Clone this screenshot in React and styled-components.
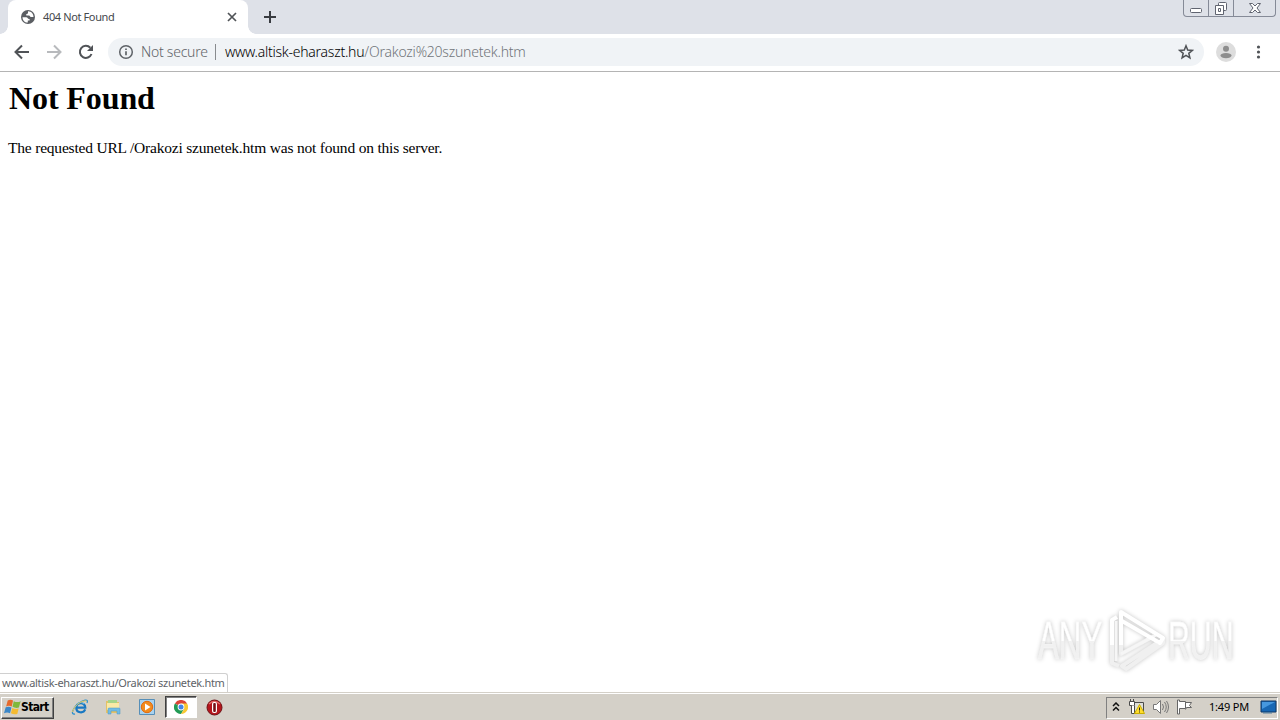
import React from 'react';
import styled, { createGlobalStyle } from 'styled-components';

const Global = createGlobalStyle`
  * { box-sizing: border-box; }
  html, body { margin: 0; width: 1280px; height: 720px; overflow: hidden; background: #fff; }
  svg { display: block; flex: none; }
`;
const Screen = styled.div`
  width: 1280px; height: 720px; display: flex; flex-direction: column;
  font-family: "DejaVu Sans Condensed", "DejaVu Sans", sans-serif;
`;
const Text = styled.span`
  white-space: pre; flex: none;
  font-family: ${p => p.$font || '"Noto Sans", sans-serif'};
  font-size: ${p => p.$size || 11}px;
  font-weight: ${p => p.$weight || 400};
  letter-spacing: ${p => p.$track || 0}px;
  color: ${p => p.$color || '#000'};
  padding-bottom: ${p => p.$lift || 0}px;
`;
const TabStrip = styled.div`
  height: 34px; background: #dee1e8; display: flex; padding-left: 8px; flex: none;
`;
const Tab = styled.div`
  position: relative; width: 240px; height: 34px; background: #fff; border-radius: 8px 8px 0 0;
  display: flex; align-items: center; padding: 0 10px 0 12px;
  &::before, &::after {
    content: ""; position: absolute; bottom: 0; width: 8px; height: 8px;
  }
  &::before { left: -8px; background: radial-gradient(circle at 0 0, transparent 7.5px, #fff 8px); }
  &::after { right: -8px; background: radial-gradient(circle at 100% 0, transparent 7.5px, #fff 8px); }
`;
const TabTitle = styled.div`flex: 1; padding-left: 7px; display: flex;`;
const NewTab = styled.div`padding: 10px 0 0 15px;`;
const WindowControls = styled.div`
  margin-left: auto; margin-right: 4px; width: 93px; height: 17px; display: flex;
  border: 1px solid #858a97; border-top: 0; border-radius: 0 0 4px 4px;
`;
const WindowButton = styled.div`
  width: ${p => p.$w}px; height: 16px; display: flex; justify-content: center;
  border-right: ${p => (p.$last ? '0' : '1px solid #858a97')};
`;
const Toolbar = styled.div`
  height: 38px; flex: none; display: flex; align-items: center; padding: 0 12px 1px;
  border-bottom: 1px solid #b4b4b4; background: #fff;
`;
const NavButton = styled.div`width: 20px; margin-right: 12px;`;
const Omnibox = styled.div`
  width: 1096px; height: 28px; border-radius: 14px; background: #f0f3f6;
  display: flex; align-items: center; padding: 0 10px;
`;
const Divider = styled.div`width: 1px; height: 16px; margin: 0 9px 0 7px; background: #888b8e;`;
const Security = styled.div`width: 74px; padding-left: 7px; display: flex;`;
const Star = styled.div`margin-left: auto;`;
const Profile = styled.div`margin: 0 14px 0 12px;`;
const Page = styled.main`
  position: relative; flex: 1; background: #fff; padding: 8px; min-height: 0;
  font-family: "Liberation Serif", serif; color: #000;
`;
const Heading = styled.h1`
  margin: 0; height: 37px; padding: 0 0 0 1px; font-size: 32px; line-height: 37px; letter-spacing: -0.1px;
`;
const Paragraph = styled.p`
  margin: 22px 0 0; font-size: 15.5px; line-height: 18px; letter-spacing: -0.2px; white-space: nowrap;
`;
const StatusBubble = styled.div`
  position: absolute; left: 0; bottom: 0; width: 228px; height: 19px; background: #fff;
  border: 1px solid #d0d0d0; border-left: 0; border-bottom: 0; border-radius: 0 3px 0 0;
  padding-left: 2px; display: flex; align-items: center;
`;
const Watermark = styled.div`
  position: absolute; left: 1038px; top: 535px; display: flex; align-items: center;
  filter: drop-shadow(0 0 2px #c4c4c4);
`;
const Brand = styled.span`
  width: ${p => p.$w}px; height: 56px; line-height: 54px;
  & > span {
    display: inline-block; transform: scaleX(${p => p.$scale}); transform-origin: left;
    font: 400 53px/54px "Liberation Sans", sans-serif;
    color: transparent; background: linear-gradient(#fff 50%, #f1f1f1 50%);
    -webkit-background-clip: text; background-clip: text; -webkit-text-stroke: 0.4px #f7f7f7;
  }
`;
const Taskbar = styled.footer`
  height: 28px; flex: none; background: #d4d0c8; border-top: 1px solid #d4d0c8;
  box-shadow: inset 0 1px #fff; display: flex; align-items: center; padding: 2px 2px 0 1px;
`;
const StartButton = styled.div`
  width: 53px; height: 22px; display: flex; align-items: center; padding-left: 2px;
  border: 1px solid; border-color: #fff #404040 #404040 #fff; box-shadow: inset -1px -1px #808080;
`;
const Launcher = styled.div`
  display: flex; margin-left: 10px; align-items: center; gap: 1.5px; padding-bottom: 1px;
`;
const TaskItem = styled.div`
  width: 32px; height: 22px; display: flex; align-items: center; justify-content: center;
  background: ${p => (p.$active ? '#fff' : 'transparent')};
  border: 1px solid; border-color: ${p => (p.$active ? '#404040 #fff #fff #404040' : 'transparent')};
  box-shadow: ${p => (p.$active ? 'inset 1px 1px #808080' : 'none')};
`;
const Tray = styled.div`
  margin-left: auto; width: 172px; height: 22px; display: flex; align-items: center;
  border: 1px solid; border-color: #808080 #fff #fff #808080; padding: 0 0 2px 5px;
`;
const TrayIcon = styled.div`margin-right: ${p => p.$gap}px;`;
const Clock = styled.div`display: flex; width: 58px; padding-left: 15px; margin-right: auto;`;

const Globe = () => (
  <svg width="16" height="16" viewBox="0 0 16 16">
    <circle cx="8" cy="8" r="7" fill="#5b5e63" />
    <path d="M2.5 8.2h3.8c1.5 0 1.5 1.8 2.7 1.8h.6v1.5H7.8v2c-3 .2-5.3-2.2-5.3-5.3M8 2.2v1.5c0 .8-.8 1.3-1.7 1.3v1.4H9c1 0 1 1.7 2.3 1.7h2.2c.2-3-2.2-6-5.5-5.9" fill="#fff" />
  </svg>
);
const Stroke = ({ d, size = 20, color = '#505357', width = 2 }) => (
  <svg width={size} height={size} viewBox={`0 0 ${size} ${size}`} fill="none" stroke={color} strokeWidth={width}>
    <path d={d} />
  </svg>
);
const Info = () => (
  <svg width="16" height="16" fill="none" stroke="#5f6368">
    <circle cx="8" cy="8" r="6.3" strokeWidth="1.5" /><path d="M8 7.3v4M8 4.4V6" strokeWidth="1.7" />
  </svg>
);
const Play = () => (
  <svg width="62" height="70" viewBox="0 0 62 70" fill="none" stroke="#fff" strokeWidth="4" strokeLinejoin="round">
    <path d="M6 36v20l7 3M15 36v11l33-18M57 31v5L20 62l-4-3 35-23" stroke="#f0f0f0" />
    <path d="M10 14v40M15 47l37-20" stroke="#f6f6f6" strokeWidth="3" />
    <path d="M6 38V13l5-3M15 38V5l42 26-3 5-38-22" />
  </svg>
);
const Windows = () => (
  <svg width="17" height="17" viewBox="0 0 16 16">
    <path d="M3.5 1.5q2.5-1.5 5 0L7.3 7Q4.5 5.5 2 7z" fill="#e66a2c" /><path d="M9.2 2q3.3 1.7 6.5 0L14 8Q11 9 8 7.3z" fill="#80b83c" />
    <path d="M1.6 7.8q3-1.3 5.4.2L5.7 13.3Q3 12 0 13.3z" fill="#3b87c8" /><path d="M7.8 8.4q3 1.5 6 .5L12.5 14q-3 1-6-.6z" fill="#f5bb32" />
  </svg>
);
const Explorer = () => (
  <svg width="18" height="18" viewBox="0 0 18 18" fill="none">
    <path d="M14.2 11.4c-1.7 4.3-8.9 3.8-8.9-1.7 0-5.8 9-6 9 0H5.4" stroke="#1878c2" strokeWidth="2.2" />
    <path d="M6 6c2-2 5-2 7 0" stroke="#78caf0" />
    <path d="M4 16c-5 1-2-6 3-10s11-6 9-1" stroke="#2d91cf" strokeWidth="1.3" /><path d="M1.5 14c1-5 8-12 14-11" stroke="#eacb5a" />
  </svg>
);
const Folder = () => (
  <svg width="18" height="18" viewBox="0 0 18 18">
    <path d="M1 3h5l1 1h7v11H1z" fill="#e3c267" /><path d="M3 2h9v5H3z" fill="#a6d48a" /><path d="M2 5h12v7H2z" fill="#fae9a6" />
    <path d="M3 16v-5q0-1 1-1h10q1 0 1 1v5h-3v-3H6v3z" fill="#71bce5" stroke="#4b96c2" strokeWidth=".5" />
  </svg>
);
const Media = () => (
  <svg width="18" height="18" viewBox="0 0 18 18">
    <path d="M1.5 1.5h15v15h-15z" fill="#a9d2ee" stroke="#578fb8" /><circle cx="9" cy="9" r="5.7" fill="#f28b1d" stroke="#e16b0e" /><path d="m7 5.5 5.5 3.5L7 12.5z" fill="#fff" />
  </svg>
);
const Chrome = () => (
  <svg width="14" height="14" viewBox="0 0 14 14">
    <path d="M7 7 .9 3.5A7 7 0 0 1 13.1 3.5z" fill="#db4437" /><path d="M7 7 .9 3.5A7 7 0 0 0 7 14l3-5z" fill="#229b55" />
    <path d="M7 7V3.5h6.1A7 7 0 0 1 7 14l3.2-5z" fill="#f8c833" /><circle cx="7" cy="7" r="3.4" fill="#fff" /><circle cx="7" cy="7" r="2.5" fill="#4285e8" />
  </svg>
);
const Opera = () => (
  <svg width="17" height="17" viewBox="0 0 17 17">
    <circle cx="8.5" cy="8.5" r="7.5" fill="#b5161d" stroke="#6c1115" /><path d="M3 5q5-5 11 0" stroke="#e66b68" strokeWidth="1.5" fill="none" />
    <rect x="6" y="3" width="5" height="11" rx="2" fill="#fff" /><rect x="7.2" y="4" width="2.6" height="9" rx="1" fill="#771015" />
  </svg>
);
const Chevrons = () => (
  <svg width="8" height="10" fill="none" stroke="#111" strokeWidth="1.5"><path d="m1 4 3-3 3 3M1 8.5l3-3 3 3" /></svg>
);
const Network = () => (
  <svg width="18" height="18" viewBox="0 0 18 18" fill="none" stroke="#4b4b4b">
    <path d="M5.5 4.5h10v9h-10z" fill="#deded9" /><path d="M1.5 3.5h5v4h-5zM2.5 1v2.5M5.5 1v2.5" fill="#fff" />
    <path d="M3.5 7.5v8h3v-8M6 15.5h5" fill="#fff" />
    <path d="m11.5 6.5 5 9h-10z" fill="#ffdc2e" stroke="#c9ae00" /><path d="M11.5 9.5v3M11.5 13.5v1" stroke="#222" />
  </svg>
);
const Speaker = () => (
  <svg width="18" height="18" viewBox="0 0 18 18" fill="none" stroke="#777">
    <path d="M1.5 6.5h3l4-4v13l-4-4h-3z" fill="#fff" /><path d="M10.5 6q2 3 0 6M12.5 4q3.5 5 0 10M14.5 3q4 6 0 12" />
  </svg>
);
const Flag = () => (
  <svg width="18" height="18" viewBox="0 0 18 18" fill="#fff" stroke="#666">
    <path d="M1.5 2v14h2v-5.5h6v-7h-6V2zM9.5 4.5h6l-2 3 2 2h-5l-1 2" />
  </svg>
);
const Desktop = () => (
  <svg width="17" height="16" viewBox="0 0 17 16"><path d="M1 2h15v11H1z" fill="#1767b4" stroke="#103967" /><path d="M2 3h13L2 10z" fill="#4698df" /><path d="M3 13h9v1.5H3z" fill="#567d9d" /></svg>
);

export default function App() {
  return (
    <Screen>
      <Global />
      <TabStrip>
        <Tab>
          <Globe />
          <TabTitle><Text $color="#45484c" $track={-0.38} $lift={2}>404 Not Found</Text></TabTitle>
          <Stroke size={12} d="m2 2 8 8m0-8-8 8" width={1.7} />
        </Tab>
        <NewTab><Stroke size={14} d="M7 1v12M1 7h12" color="#383b40" /></NewTab>
        <WindowControls>
          <WindowButton $w={25}><svg width="14" height="16" fill="#fff" stroke="#606470"><rect x="1.5" y="8.5" width="11" height="4" rx="1" /></svg></WindowButton>
          <WindowButton $w={25}><svg width="14" height="16" fill="#fff" stroke="#606470"><rect x="4.5" y="2.5" width="8" height="8" rx="1" /><path d="M1.5 5.5h8v9h-8zM4.5 8.5h2v3h-2z" /></svg></WindowButton>
          <WindowButton $w={41} $last><svg width="14" height="16" fill="#fff" stroke="#606470"><path d="M1.5 3.5h3L7 6l2.5-2.5h3L9 8l3.5 4.5h-3L7 10l-2.5 2.5h-3L5 8z" /></svg></WindowButton>
        </WindowControls>
      </TabStrip>
      <Toolbar>
        <NavButton><Stroke d="M17 10H4M10 3.5 3.5 10l6.5 6.5" /></NavButton>
        <NavButton><Stroke d="M3 10h13M10 3.5l6.5 6.5-6.5 6.5" color="#b8babd" /></NavButton>
        <NavButton><svg width="20" height="20"><path d="M15.5 12a6 6 0 1 1-1.2-6.2" fill="none" stroke="#505357" strokeWidth="2" /><path d="M17 3v6h-6z" fill="#505357" /></svg></NavButton>
        <Omnibox>
          <Info />
          <Security><Text $size={14} $weight={300} $track={-0.25} $lift={2} $color="#5f6368">Not secure</Text></Security>
          <Divider />
          <Text $size={14} $weight={300} $track={-0.25} $lift={2}>www.altisk-eharaszt.hu</Text>
          <Text $size={14} $weight={300} $track={-0.22} $lift={2} $color="#70757a">/Orakozi%20szunetek.htm</Text>
          <Star><Stroke size={16} width={1.5} d="m8 1.8 1.7 4.3 4.6.3-3.5 2.9 1.1 4.5L8 11.3l-3.9 2.5 1.1-4.5-3.5-2.9 4.6-.3z" /></Star>
        </Omnibox>
        <Profile><svg width="20" height="20"><circle cx="10" cy="10" r="10" fill="#dddddd" /><circle cx="10" cy="6.8" r="3" fill="#8d8d8d" /><ellipse cx="10" cy="13.6" rx="5.5" ry="2.6" fill="#8d8d8d" /></svg></Profile>
        <svg width="16" height="16" fill="#505357"><circle cx="8.5" cy="3" r="1.6" /><circle cx="8.5" cy="8" r="1.6" /><circle cx="8.5" cy="13" r="1.6" /></svg>
      </Toolbar>
      <Page>
        <Heading>Not Found</Heading>
        <Paragraph>The requested URL /Orakozi szunetek.htm was not found on this server.</Paragraph>
        <StatusBubble><Text $color="#606367" $track={-0.32} $lift={2}>www.altisk-eharaszt.hu/Orakozi szunetek.htm</Text></StatusBubble>
        <Watermark>
          <Brand $w={68} $scale={0.59}><span>ANY</span></Brand>
          <Play />
          <Brand $w={68} $scale={0.57}><span>RUN</span></Brand>
        </Watermark>
      </Page>
      <Taskbar>
        <StartButton><Windows /><Text $weight={700} $size={12} $track={-0.65} $lift={1} $font={'"DejaVu Sans Condensed", "DejaVu Sans", sans-serif'}>Start</Text></StartButton>
        <Launcher>
          <TaskItem><Explorer /></TaskItem><TaskItem><Folder /></TaskItem><TaskItem><Media /></TaskItem>
          <TaskItem $active><Chrome /></TaskItem><TaskItem><Opera /></TaskItem>
        </Launcher>
        <Tray>
          <TrayIcon $gap={8}><Chevrons /></TrayIcon>
          <TrayIcon $gap={6}><Network /></TrayIcon>
          <TrayIcon $gap={6}><Speaker /></TrayIcon>
          <Flag />
          <Clock><Text $track={-0.2}>1:49 PM</Text></Clock>
          <Desktop />
        </Tray>
      </Taskbar>
    </Screen>
  );
}
